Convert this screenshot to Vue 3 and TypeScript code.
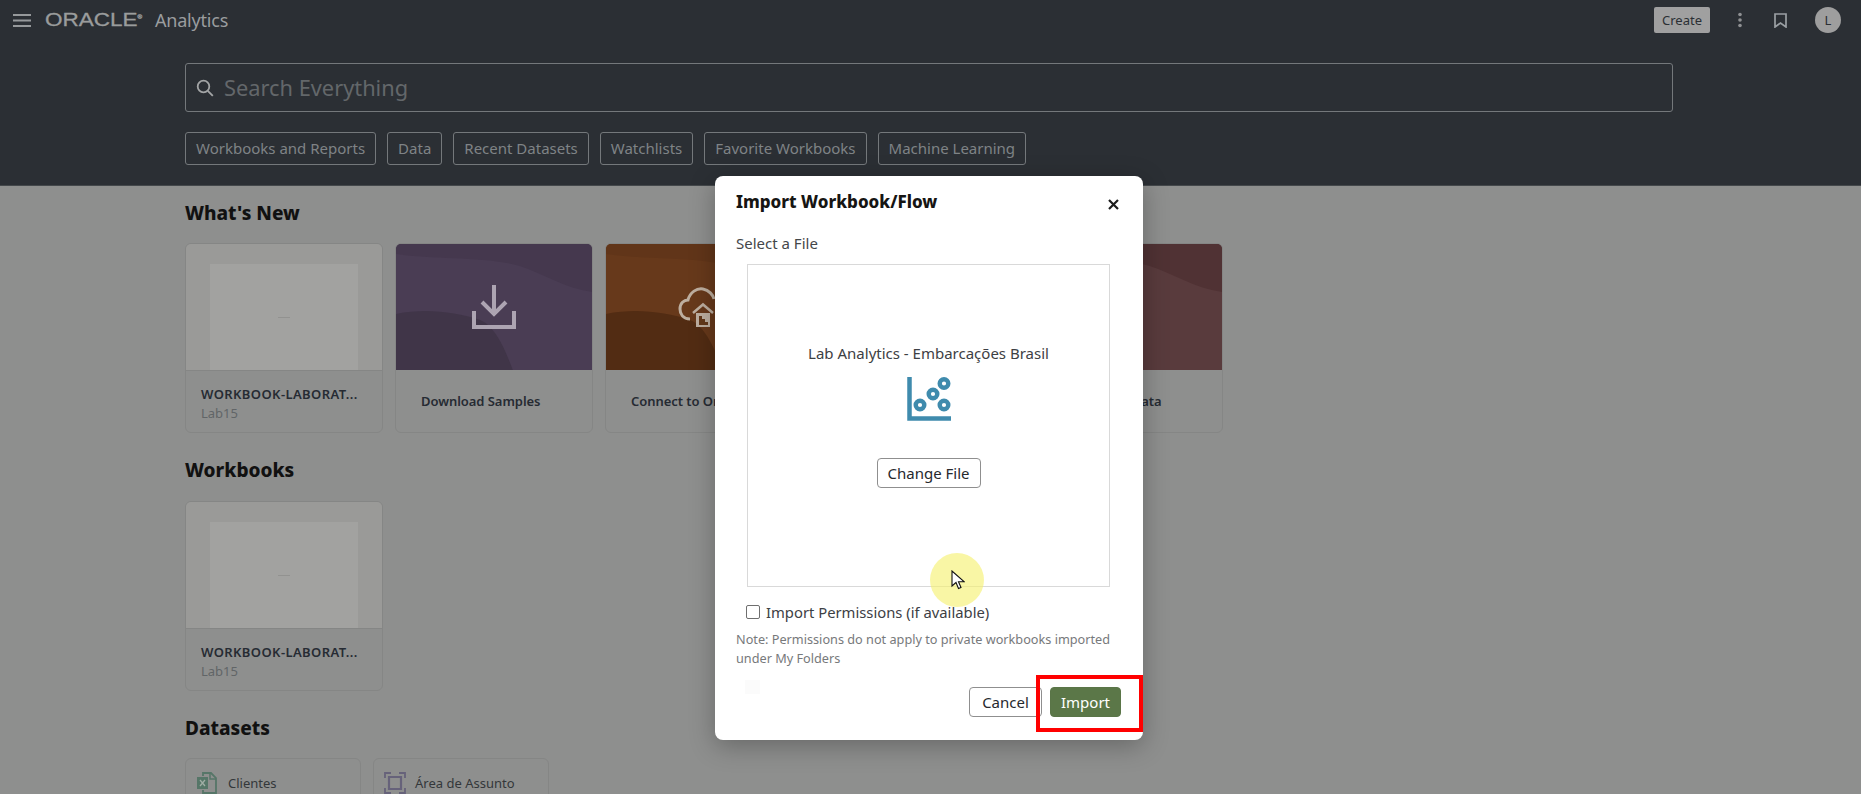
<script setup lang="ts">
interface Chip { label: string }
interface Tile { title: string; tone: string; icon: string }

const chips: Chip[] = [
  { label: 'Workbooks and Reports' },
  { label: 'Data' },
  { label: 'Recent Datasets' },
  { label: 'Watchlists' },
  { label: 'Favorite Workbooks' },
  { label: 'Machine Learning' },
]

const tiles: Tile[] = [
  { title: 'Download Samples', tone: 'purple', icon: 'download' },
  { title: 'Connect to Oracle', tone: 'orange', icon: 'cloud' },
  { title: 'Explore', tone: 'blue', icon: '' },
  { title: 'Visualize My Data', tone: 'red', icon: '' },
]
</script>

<template>
  <div class="page">
    <header class="top">
      <div class="bar">
        <svg class="burger" width="18" height="13" viewBox="0 0 18 13"><path d="M0 1h18M0 6.500h18M0 12h18" stroke="#96999b" stroke-width="1.800" /></svg>
        <span class="oracle">ORACLE<sup>®</sup></span>
        <span class="product">Analytics</span>
        <span class="spacer"></span>
        <button class="create">Create</button>
        <svg class="dots" width="6" height="16" viewBox="0 0 6 16"><circle cx="3" cy="2.500" r="1.800" /><circle cx="3" cy="8" r="1.800" /><circle cx="3" cy="13.500" r="1.800" /></svg>
        <svg class="mark" width="13" height="15" viewBox="0 0 13 15"><path d="M1 1h11v13l-5.500-4L1 14z" fill="none" stroke="#9a9fa3" stroke-width="1.700" /></svg>
        <span class="avatar">L</span>
      </div>
      <div class="search">
        <svg width="18" height="18" viewBox="0 0 18 18"><circle cx="7.500" cy="7.500" r="5.800" fill="none" stroke="#a3a5a6" stroke-width="1.800" /><path d="M11.800 11.800l5 5" stroke="#a3a5a6" stroke-width="1.900" /></svg>
        <span class="placeholder">Search Everything</span>
      </div>
      <div class="chips">
        <span v-for="c in chips" :key="c.label" class="chip">{{ c.label }}</span>
      </div>
    </header>

    <main class="content">
      <h2>What's New</h2>
      <div class="row">
        <article class="card">
          <div class="thumb"><div class="sheet"><i></i></div></div>
          <div class="meta">
            <strong>WORKBOOK-LABORAT...</strong>
            <small>Lab15</small>
          </div>
        </article>
        <article v-for="t in tiles" :key="t.title" class="card">
          <div class="art" :class="t.tone">
            <svg class="wave" viewBox="0 0 198 126" preserveAspectRatio="none">
              <path d="M0 70C30 64 60 68 85 76C100 82 110 105 118 126H0z" class="shade" />
              <path d="M0 0H198V48C170 44 150 30 125 22C90 12 40 16 0 10z" class="shade2" />
            </svg>
            <svg v-if="t.icon === 'download'" class="glyph" width="44" height="44" viewBox="0 0 44 44">
              <path d="M22 0v29M10 17l12 12 12-12" fill="none" stroke="#ada4b2" stroke-width="4" />
              <path d="M2 26v16h40V26" fill="none" stroke="#ada4b2" stroke-width="4" />
            </svg>
            <svg v-if="t.icon === 'cloud'" class="glyph cloud" width="46" height="44" viewBox="0 0 46 44">
              <path d="M12 33C5 33 2 28 2 23C2 17 6 14 10 14C12 6 19 2 25 3C31 4 35 9 36 13" fill="none" stroke="#bdae9f" stroke-width="3" />
              <path d="M15 27L25 18.500L35 27" fill="none" stroke="#bdae9f" stroke-width="2.500" />
              <path d="M18 27h14v14H18z" fill="#bdae9f" />
              <path d="M21 30h3v3h3v3h3v3h-9z" fill="#63391a" />
            </svg>
          </div>
          <div class="meta center"><strong>{{ t.title }}</strong></div>
        </article>
      </div>

      <h2>Workbooks</h2>
      <div class="row">
        <article class="card">
          <div class="thumb"><div class="sheet"><i></i></div></div>
          <div class="meta">
            <strong>WORKBOOK-LABORAT...</strong>
            <small>Lab15</small>
          </div>
        </article>
      </div>

      <h2 class="tight">Datasets</h2>
      <div class="row sets">
        <article class="set">
          <svg width="21" height="22" viewBox="0 0 21 22"><path d="M7 4V1h8l5 5v15H7v-3" fill="none" stroke="#567668" stroke-width="1.800" /><path d="M14 1v6h6" fill="none" stroke="#567668" stroke-width="1.500" /><path d="M1 5h11v12H1z" fill="#567668" /><path d="M4 8l5 6M9 8l-5 6" stroke="#a0aea5" stroke-width="1.300" /></svg>
          <span>Clientes</span>
        </article>
        <article class="set second">
          <svg width="22" height="22" viewBox="0 0 22 22"><path d="M1 6V1h6M15 1h6v5M21 16v5h-6M7 21H1v-5" fill="none" stroke="#66627a" stroke-width="1.800" /><path d="M5 5h12v12H5z" fill="none" stroke="#66627a" stroke-width="2.200" /></svg>
          <span>Área de Assunto</span>
        </article>
      </div>
    </main>

    <section class="dialog">
      <div class="dialog-head">
        <h3>Import Workbook/Flow</h3>
        <svg width="11" height="11" viewBox="0 0 11 11"><path d="M1 1l9 9M10 1l-9 9" stroke="#1c1c1c" stroke-width="2.200" /></svg>
      </div>
      <p class="select">Select a File</p>
      <div class="drop">
        <p class="file">Lab Analytics - Embarcações Brasil</p>
        <svg class="chart" width="44" height="44" viewBox="0 0 44 44">
          <path d="M2.500 0v41.500H44" fill="none" stroke="#3f8bad" stroke-width="4.500" />
          <g fill="none" stroke="#3f8bad" stroke-width="4.400">
            <circle cx="13" cy="28" r="4.300" />
            <circle cx="26" cy="17" r="4.300" />
            <circle cx="37" cy="6.500" r="4.300" />
            <circle cx="37" cy="28" r="4.300" />
          </g>
        </svg>
        <button class="btn change">Change File</button>
      </div>
      <label class="perm"><span class="box"></span>Import Permissions (if available)</label>
      <p class="note">Note: Permissions do not apply to private workbooks imported under My Folders</p>
      <div class="actions">
        <button class="btn">Cancel</button>
        <button class="btn primary">Import</button>
      </div>
      <span class="ghost"></span>
      <span class="halo"></span>
      <svg class="cursor" width="14" height="21" viewBox="0 0 14 21"><path d="M1 1v15l4-3.500 2.500 6 2.500-1-2.500-5.800H13z" fill="#fff" stroke="#111" stroke-width="1.100" /></svg>
      <span class="callout"></span>
    </section>
  </div>
</template>

<style>
html, body { margin: 0; overflow: hidden; background: #8e8f8e; }
</style>

<style scoped>
.page {
  position: relative;
  height: 794px;
  overflow: hidden;
  background: #8e8f8e;
  font-family: "Noto Sans", "Liberation Sans", sans-serif;
  color: #2b2f34;
}
.top {
  box-sizing: border-box;
  height: 186px;
  background: #2b2f34;
  border-bottom: 1px solid #44484b;
}
.bar {
  display: flex;
  align-items: center;
  height: 40px;
  padding-left: 13px;
  padding-right: 20px;
}
.oracle {
  margin-left: 14px;
  width: 99px;
  font-family: "Liberation Sans", sans-serif;
  font-size: 18px;
  -webkit-text-stroke: 0.3px #9a9c9c;
  color: #9a9c9c;
  transform: scaleX(1.25);
  transform-origin: left center;
  white-space: nowrap;
}
.oracle sup { font-size: 5px; }
.product { margin-left: 11px; font-size: 18px; color: #9a9d9f; letter-spacing: -0.2px; }
.spacer { flex: 1; }
.create {
  width: 56px;
  height: 26px;
  padding: 0;
  border: 0;
  border-radius: 2px;
  background: #a0a0a0;
  color: #2b2f34;
  font: 13px "Noto Sans", sans-serif;
}
.dots { margin-left: 27px; fill: #8f9193; }
.mark { margin-left: 31px; }
.avatar {
  width: 26px;
  height: 26px;
  margin-left: 28px;
  border-radius: 50%;
  background: #9e9e9e;
  text-align: center;
  font-size: 13px;
  line-height: 26px;
}
.search {
  box-sizing: border-box;
  display: flex;
  align-items: center;
  gap: 10px;
  height: 49px;
  margin: 23px 188px 0 185px;
  padding-left: 10px;
  border: 1px solid #74787b;
  border-radius: 3px;
}
.placeholder { font-size: 21.800px; color: #63676a; }
.chips {
  display: flex;
  gap: 11px;
  margin: 20px 0 0 185px;
}
.chip {
  box-sizing: border-box;
  height: 33px;
  padding: 0 10px;
  border: 1px solid #74787b;
  border-radius: 3px;
  font-size: 15px;
  line-height: 31px;
  color: #7f8386;
  white-space: nowrap;
}
.content { padding: 12px 0 0 185px; }
h2 {
  margin: 22px 0 16px;
  font-size: 19px;
  line-height: 30px;
  font-weight: 800;
  color: #111;
}
h2:first-child { margin-top: 0; margin-bottom: 15px; }
h2.tight { margin-bottom: 15px; }
.row { display: flex; gap: 12px; }
.card {
  box-sizing: border-box;
  width: 198px;
  height: 190px;
  flex: none;
  border: 1px solid #858685;
  border-radius: 6px;
  overflow: hidden;
}
.thumb {
  height: 127px;
  background: #9a9a98;
  border-bottom: 1px solid #858685;
  box-sizing: border-box;
  display: flex;
  justify-content: center;
  padding-top: 20px;
}
.sheet {
  display: flex;
  align-items: center;
  justify-content: center;
  width: 148px;
  background: #a2a2a0;
}
.sheet i { width: 12px; height: 1px; background: #929290; }
.art {
  position: relative;
  height: 126px;
  display: flex;
  align-items: center;
  justify-content: center;
}
.wave { position: absolute; inset: 0; width: 100%; height: 100%; }
.glyph { position: relative; margin-top: -1px; }
.cloud { margin: 1px 6px 0 0; }
.purple { background: #4a3d54; }
.purple .shade { fill: #403548; }
.purple .shade2 { fill: #45384e; }
.orange { background: #67391b; }
.orange .shade { fill: #522c13; }
.orange .shade2 { fill: #613519; }
.blue { background: #3a4955; }
.blue .shade, .blue .shade2 { fill: #323f49; }
.red { background: #593b3d; }
.red .shade { fill: #593b3d; }
.red .shade2 { fill: #503234; }
.meta {
  display: flex;
  flex-direction: column;
  gap: 1px;
  padding: 14px 0 0 15px;
}
.meta strong {
  font-size: 13px;
  line-height: 18px;
  font-weight: 600;
  letter-spacing: 0.4px;
  color: #262b33;
  white-space: nowrap;
}
.meta small { font-size: 13px; line-height: 18px; color: #616567; }
.center { padding: 22px 0 0 25px; }
.center strong { letter-spacing: -0.05px; }
.set {
  box-sizing: border-box;
  display: flex;
  align-items: flex-start;
  gap: 11px;
  width: 176px;
  height: 70px;
  padding: 13px 0 0 10px;
  border: 1px solid #858685;
  border-radius: 6px;
  font-size: 13px;
  line-height: 22px;
  color: #33373a;
}
.set.second { gap: 9px; }
.dialog {
  box-sizing: border-box;
  position: absolute;
  left: 715px;
  top: 176px;
  width: 428px;
  height: 564px;
  padding: 12px 22px 0 21px;
  background: #fff;
  border-radius: 8px;
  box-shadow: 0 6px 26px rgba(0, 0, 0, 0.28);
}
.dialog-head {
  display: flex;
  align-items: center;
  justify-content: space-between;
  height: 28px;
  padding-right: 1px;
}
.dialog-head svg { margin: 4px 1px 0 0; }
h3 { margin: -2px 0 0; font-size: 17px; font-weight: 800; color: #161513; }
.select {
  margin: 17px 0 0;
  font-size: 15px;
  line-height: 20px;
  color: #44474a;
}
.drop {
  box-sizing: border-box;
  display: flex;
  flex-direction: column;
  align-items: center;
  width: 363px;
  height: 323px;
  margin: 11px 0 0 11px;
  padding-top: 78px;
  border: 1px solid #d9d9d9;
}
.file { margin: 0; font-size: 15px; line-height: 20px; color: #3d4044; }
.chart { margin-top: 14px; }
.btn {
  box-sizing: border-box;
  height: 30px;
  padding: 0 11px;
  border: 1px solid #8f8f8f;
  border-radius: 4px;
  background: #fff;
  color: #26292e;
  font: 15px "Noto Sans", sans-serif;
}
.change { width: 104px; margin-top: 37px; padding: 0; }
.perm {
  display: flex;
  align-items: center;
  gap: 6px;
  height: 20px;
  margin: 15px 0 0 10px;
  font-size: 14.800px;
  color: #3d4044;
}
.box {
  box-sizing: border-box;
  width: 14px;
  height: 14px;
  border: 1px solid #6f6f6f;
  border-radius: 2px;
}
.note {
  margin: 8px 0 0;
  font-size: 12.700px;
  line-height: 19px;
  color: #77797b;
}
.actions {
  display: flex;
  justify-content: flex-end;
  gap: 8px;
  margin-top: 19px;
}
.actions .btn { width: 73px; padding: 0; }
.actions .primary {
  width: 71px;
  border-color: #5a7548;
  background: #5b7748;
  color: #fff;
}
.ghost {
  position: absolute;
  left: 30px;
  top: 504px;
  width: 15px;
  height: 14px;
  background: #fbfbfb;
}
.halo {
  position: absolute;
  left: 215px;
  top: 377px;
  width: 54px;
  height: 54px;
  border-radius: 50%;
  background: rgba(245, 240, 110, 0.62);
}
.cursor { position: absolute; left: 236px; top: 394px; }
.callout {
  box-sizing: border-box;
  position: absolute;
  left: 321px;
  top: 499px;
  width: 107px;
  height: 57px;
  border: 4px solid #f00;
}
</style>
